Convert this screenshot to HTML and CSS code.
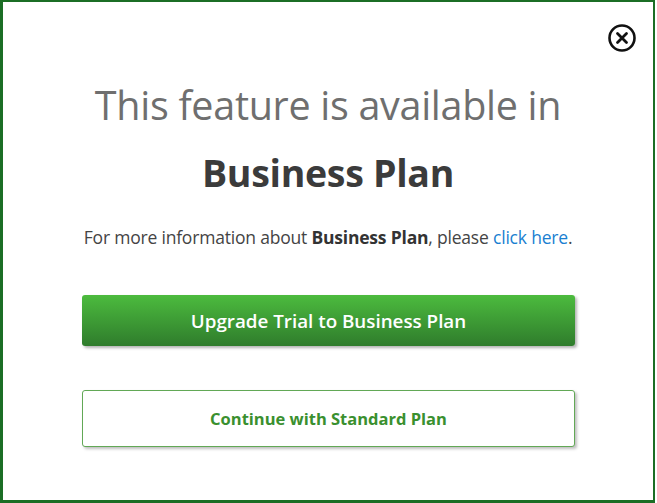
FILE: index.html
```html
<!DOCTYPE html>
<html>
<head>
<meta charset="utf-8">
<link rel="stylesheet" href="styles.css">
</head>
<body>
<div class="dialog">
  <button class="close" aria-label="Close">
    <svg width="30" height="30" viewBox="0 0 30 30">
      <circle cx="15" cy="15" r="12.5" fill="none" stroke="#111" stroke-width="2.6"/>
      <path d="M10.5 10.5 L19.5 19.5 M19.5 10.5 L10.5 19.5" stroke="#111" stroke-width="2.8" stroke-linecap="round"/>
    </svg>
  </button>
  <h1 class="title">This feature is available in</h1>
  <h2 class="plan">Business Plan</h2>
  <p class="info">For more information about <b>Business Plan</b>, please <a href="#">click here</a>.</p>
  <div class="actions">
    <button class="btn btn-primary">Upgrade Trial to Business Plan</button>
    <button class="btn btn-secondary">Continue with Standard Plan</button>
  </div>
</div>
</body>
</html>
```
FILE: styles.css
```css
html, body {
  margin: 0;
  padding: 0;
  background: #fff;
}
body {
  font-family: "Open Sans", "Noto Sans", sans-serif;
}
.dialog {
  position: relative;
  box-sizing: border-box;
  width: 655px;
  height: 503px;
  border: 2px solid #1b6e25;
  border-left-width: 3px;
  border-bottom-width: 3px;
  background: #fff;
  display: flex;
  flex-direction: column;
  align-items: center;
  padding-top: 78px;
}
.close {
  position: absolute;
  top: 21px;
  right: 16px;
  width: 30px;
  height: 30px;
  padding: 0;
  border: 0;
  background: none;
}
.close svg { display: block; }
.title {
  margin: 0;
  font-weight: 400;
  font-size: 39.5px;
  line-height: 50px;
  color: #6f6f6f;
  letter-spacing: -0.3px;
}
.plan {
  margin: 18px 0 0;
  font-weight: 700;
  font-size: 37.5px;
  line-height: 50px;
  color: #3b3b3b;
  letter-spacing: -0.3px;
}
.info {
  margin: 28px 0 0;
  font-size: 17.5px;
  line-height: 22px;
  color: #444;
  letter-spacing: -0.2px;
}
.info b { color: #333; }
.info a {
  color: #1a7fd1;
  text-decoration: none;
}
.actions {
  margin-top: 47px;
  display: flex;
  flex-direction: column;
  gap: 44px;
  width: 493px;
  margin-left: 1px;
}
.btn {
  height: 51px;
  border-radius: 3px;
  font-family: inherit;
  font-weight: 600;
  cursor: pointer;
}
.btn-primary {
  border: 0;
  background: linear-gradient(#4cbb3e, #2f7c2c);
  color: #fff;
  font-size: 18.8px;
  box-shadow: 2px 2px 3px rgba(0,0,0,0.3);
}
.btn-secondary {
  height: 57px;
  border: 1.5px solid #62a856;
  background: #fff;
  color: #3a902f;
  font-size: 16.5px;
  font-weight: 700;
  box-shadow: 2px 2px 3px rgba(0,0,0,0.25);
}
```
